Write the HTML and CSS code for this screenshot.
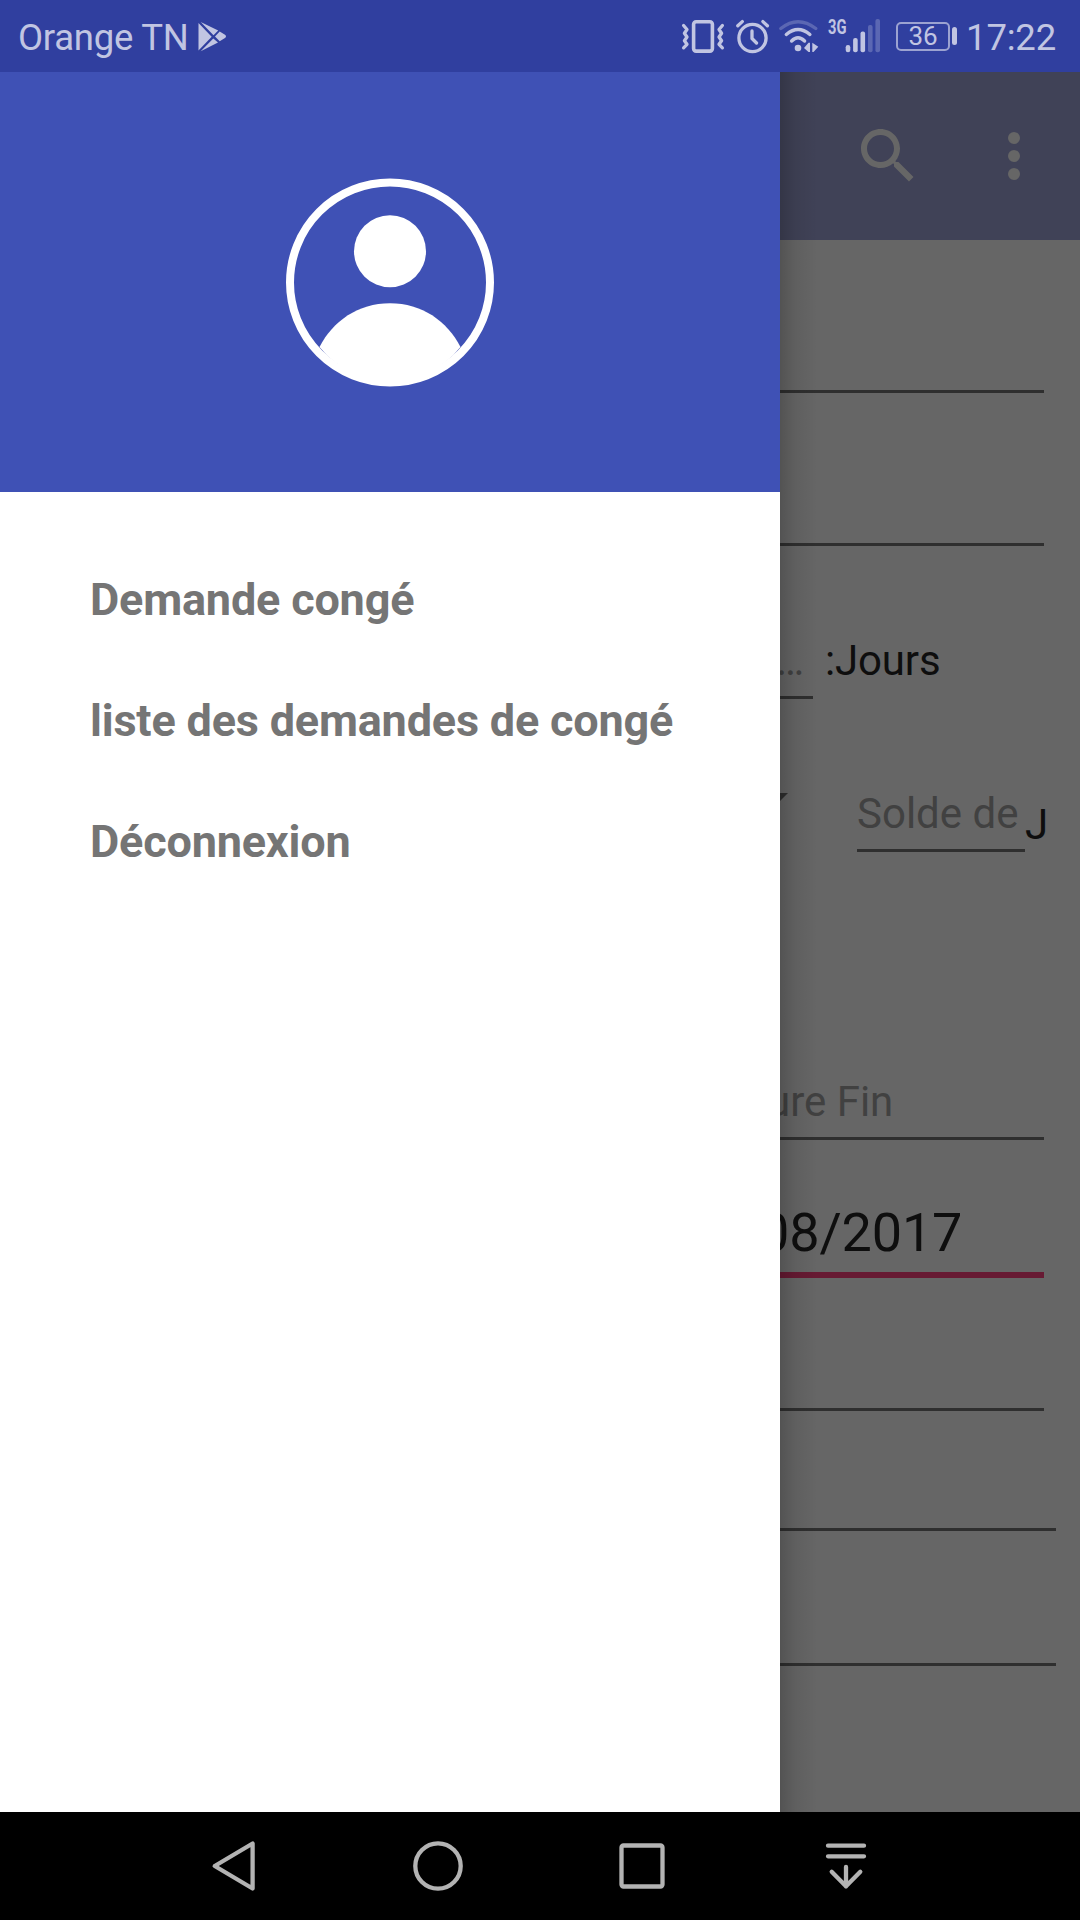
FILE: index.html
```html
<!DOCTYPE html>
<html lang="fr">
<head>
<meta charset="utf-8">
<title>Demande congé</title>
<link rel="stylesheet" href="styles.css">
</head>
<body>
<header class="status">
  <span class="carrier">Orange TN</span>
  <svg class="play" width="30" height="72" viewBox="197 0 30 72" fill="currentColor">
    <path d="M198.500 23v27.500l13.200-13.700zM200.700 22l17.500 8.600-4.700 4.700zM219.700 31.500l5.300 3.200q2 1.600 0 3.400l-5.300 3.200-4.700-4.800zM200.700 51.300l12.600-12.900 4.700 4z"/>
  </svg>
  <div class="status-icons">
    <svg width="46" height="72" viewBox="0 0 46 72" fill="none" stroke="currentColor" stroke-width="3.600" stroke-linecap="round" stroke-linejoin="round">
      <rect x="13.600" y="21.700" width="18.800" height="29.400" rx="2.500"/>
      <path stroke-width="3.300" d="M3.600 25.500l3.400 4-2.600 3.700 2.600 3.800-2.600 3.800 2.600 3.500-3.400 3.500M42.400 25.500l-3.400 4 2.600 3.700-2.600 3.800 2.600 3.800-2.600 3.500 3.400 3.500"/>
    </svg>
    <svg class="alarm" width="37" height="72" viewBox="0 0 37 72" fill="none" stroke="currentColor" stroke-width="3.300" stroke-linecap="round" stroke-linejoin="round">
      <circle cx="18.500" cy="38" r="13.600"/>
      <path d="M18 31v7.500l4.500 4.500M3.800 25.800l4.500-4.200M28.900 21.600l4.500 4.200"/>
    </svg>
    <svg class="wifi" width="42" height="72" viewBox="0 0 42 72" fill="none" stroke="currentColor" stroke-width="3.400" stroke-linecap="round">
      <path opacity=".3" d="M2.800 28.500Q20 14.800 37.800 28.500"/>
      <path d="M8.300 34.500Q20 24.500 31.900 34.500M13.600 41Q20 34.500 26.600 41"/>
      <circle cx="20" cy="48" r="3.300" fill="currentColor" stroke="none"/>
      <path fill="currentColor" stroke="none" d="M26 48l4.500-5.300h1.500v9.300h-1.500zM34.300 42.700l6 4-4.800 5.300h-1.200z"/>
    </svg>
    <svg class="signal" width="54" height="72" viewBox="827 0 54 72" fill="currentColor">
      <text class="network" x="828" y="33.500" textLength="18.500" lengthAdjust="spacingAndGlyphs">3G</text>
      <rect x="845.700" y="45" width="4.600" height="7.300" rx="2.200"/>
      <rect x="853.100" y="38" width="4.600" height="14.300" rx="2"/>
      <rect x="860.500" y="31.500" width="4.600" height="20.800" rx="2"/>
      <rect x="868" y="25" width="4.600" height="27.300" rx="2" opacity=".3"/>
      <rect x="875.400" y="19" width="4.600" height="33.300" rx="2" opacity=".3"/>
    </svg>
    <div class="battery"><span class="cell">36</span><i class="nub"></i></div>
    <span class="clock">17:22</span>
  </div>
</header>

<div class="screen">
  <nav class="drawer">
    <div class="drawer-header">
      <svg width="208" height="209" viewBox="0 0 208 209">
        <circle cx="104" cy="104.500" r="100" fill="none" stroke="#fff" stroke-width="8"/>
        <circle cx="104" cy="73.300" r="36" fill="#fff"/>
        <path fill="#fff" d="M33.500 169C47 143 72 125.300 104 125.300s57 17.700 70.500 43.700a90 90 0 0 1-141 0z"/>
      </svg>
    </div>
    <ul class="menu">
      <li>Demande congé</li>
      <li>liste des demandes de congé</li>
      <li>Déconnexion</li>
    </ul>
  </nav>

  <main class="page">
    <div class="toolbar">
      <svg width="72" height="72" viewBox="0 0 24 24" fill="currentColor"><path d="M15.500 14h-.79l-.28-.27C15.410 12.590 16 11.110 16 9.500 16 5.910 13.090 3 9.500 3S3 5.910 3 9.500 5.910 16 9.500 16c1.610 0 3.090-.59 4.230-1.570l.27.28v.79l5 4.990L20.490 19l-4.990-5zm-6 0C7.010 14 5 11.990 5 9.500S7.010 5 9.500 5 14 7.010 14 9.500 11.990 14 9.500 14z"/></svg>
      <svg width="72" height="72" viewBox="0 0 24 24" fill="currentColor"><circle cx="12" cy="6" r="2"/><circle cx="12" cy="12" r="2"/><circle cx="12" cy="18" r="2"/></svg>
    </div>
    <div class="form">
      <div class="row"><div class="field"></div></div>
      <div class="row"><div class="field"></div></div>
      <div class="row days">
        <div class="field short hint">…</div>
        <span class="label">:Jours</span>
      </div>
      <div class="row balance">
        <svg class="caret" width="8" height="8" viewBox="0 0 8 8"><path d="M0 0h8L0 8z" fill="#2f2f2f"/></svg>
        <div class="field solde hint">Solde de</div>
        <span class="unit">J</span>
      </div>
      <div class="row end-time"><div class="field hint">ure Fin</div></div>
      <div class="row date"><div class="field focused">08/2017</div></div>
      <div class="row after-date"><div class="field"></div></div>
      <div class="row wide reason"><div class="field"></div></div>
      <div class="row wide last"><div class="field"></div></div>
    </div>
  </main>
</div>

<footer class="navbar">
  <svg viewBox="-102 -54 204 108"><path d="M-19.300 0L18.600-22.500v45z"/></svg>
  <svg viewBox="-102 -54 204 108"><circle r="22.700"/></svg>
  <svg viewBox="-102 -54 204 108"><rect x="-20.500" y="-20.500" width="41" height="41" rx="2"/></svg>
  <svg viewBox="-102 -54 204 108"><path d="M-18-20.300h36M-18-9.700h36M0 1v19.500M-14.300 5.700L0 20.300 14.300 5.700"/></svg>
</footer>
</body>
</html>
```
FILE: styles.css
```css
* {
  box-sizing: border-box;
}

body {
  margin: 0;
  width: 1080px;
  height: 1920px;
  display: flex;
  flex-direction: column;
  overflow: hidden;
  background: #000;
  font-family: Roboto, sans-serif;
}

svg {
  display: block;
  flex: none;
}

/* Status bar */
.status {
  height: 72px;
  display: flex;
  align-items: center;
  padding: 0 24px 0 18px;
  background: #303f9f;
  color: #c1c5e2;
  font-size: 36.500px;
  line-height: 44px;
  white-space: nowrap;
}

.carrier {
  width: 179px;
  padding-top: 4px;
  letter-spacing: -.25px;
}

.status-icons {
  display: flex;
  align-items: center;
  margin-left: auto;
}

.alarm {
  margin-left: 8px;
}

.wifi {
  margin-left: 7px;
}

.signal {
  margin-left: 7px;
}

.network {
  font-size: 20.500px;
  font-weight: 700;
}

.battery {
  display: flex;
  align-items: center;
  gap: 2px;
  margin-left: 15px;
}

.cell {
  width: 54px;
  height: 29px;
  border: 2px solid #9ca3d1;
  border-radius: 5px;
  font-size: 26px;
  line-height: 24px;
  text-align: center;
}

.nub {
  width: 5px;
  height: 18px;
  border-radius: 2.500px;
  background: #c1c5e2;
}

.clock {
  padding-top: 4px;
  margin-left: 9px;
  letter-spacing: -.2px;
}

/* Drawer and page */
.screen {
  height: 1740px;
  display: grid;
  grid-template-columns: 780px 300px;
}

.drawer {
  background: #fff;
}

.drawer-header {
  height: 420px;
  display: flex;
  align-items: center;
  justify-content: center;
  background: #3f51b5;
}

.menu {
  list-style: none;
  margin: 0;
  padding: 47px 90px;
  color: #757575;
  font-size: 45px;
  font-weight: 700;
  letter-spacing: -.19px;
  line-height: 121px;
  white-space: nowrap;
}

.page {
  position: relative;
  overflow: hidden;
  background: #666;
  color: #0e0e0e;
  font-size: 42px;
  line-height: 50px;
  white-space: nowrap;
}

/* Shade cast by the drawer's edge */
.page::after {
  content: "";
  position: absolute;
  inset: 0 auto 0 0;
  width: 38px;
  background: linear-gradient(90deg, rgba(0, 0, 0, .19), rgba(0, 0, 0, .07) 40%, transparent);
}

.toolbar {
  height: 168px;
  display: flex;
  align-items: center;
  justify-content: flex-end;
  gap: 54px;
  padding-right: 30px;
  background: #404257;
  color: #666;
}

.row {
  height: 153px;
  display: flex;
  align-items: flex-end;
  padding-right: 36px;
}

.field {
  flex: 1;
  padding-bottom: 10px;
  border-bottom: 3px solid #2f2f2f;
}

.hint {
  color: #414141;
}

.short {
  flex: none;
  width: 33px;
  text-indent: -4px;
}

.label {
  margin: 0 0 13px 12px;
  letter-spacing: -.15px;
}

.balance {
  padding-right: 0;
}

.caret {
  align-self: flex-start;
  margin-top: 94px;
}

.solde {
  flex: none;
  width: 168px;
  margin-left: 69px;
}

.unit {
  margin-bottom: 2px;
}

.end-time {
  height: 288px;
  text-indent: -13px;
}

.date {
  height: 138px;
  font-size: 54px;
  line-height: 64px;
  text-indent: -21px;
  letter-spacing: -.15px;
}

.focused {
  padding-bottom: 7px;
  border-bottom: 6px solid #671a33;
}

.after-date {
  height: 133px;
}

.wide {
  padding-right: 24px;
}

.reason {
  height: 120px;
}

.last {
  height: 135px;
}

/* System navigation */
.navbar {
  height: 108px;
  display: flex;
  justify-content: center;
  background: #000;
}

.navbar svg {
  width: 204px;
  height: 108px;
  fill: none;
  stroke: #b3b3b3;
  stroke-width: 4.300;
  stroke-linecap: round;
  stroke-linejoin: round;
}
```
